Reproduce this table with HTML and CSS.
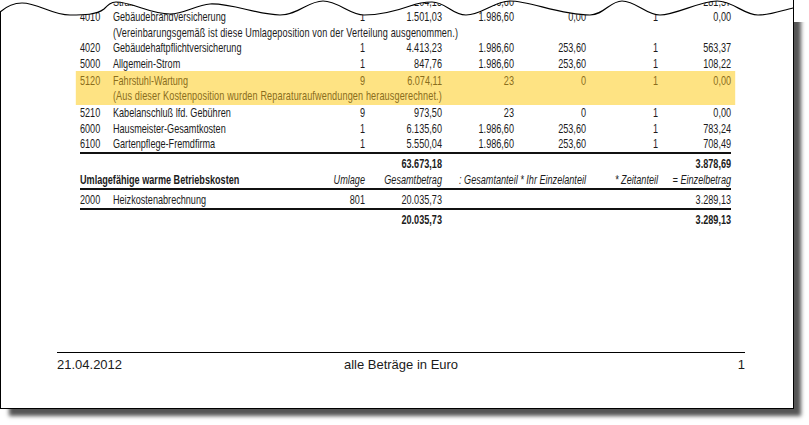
FILE: index.html
```html
<!DOCTYPE html>
<html lang="de">
<head>
<meta charset="utf-8">
<title>Betriebskostenabrechnung</title>
<link rel="stylesheet" href="styles.css">
</head>
<body>
<div class="stage">
  <div class="page">
    <div class="report">
      <div class="row">
        <span>4000</span><span>Straßenreinigung</span><span class="num">1</span><span class="num">2.204,13</span><span class="num">1.986,60</span><span class="num">253,60</span><span class="num">1</span><span class="num">281,37</span>
      </div>
      <div class="row">
        <span>4010</span><span>Gebäudebrandversicherung</span><span class="num">1</span><span class="num">1.501,03</span><span class="num">1.986,60</span><span class="num">0,00</span><span class="num">1</span><span class="num">0,00</span>
      </div>
      <div class="row">
        <span class="note">(Vereinbarungsgemäß ist diese Umlageposition von der Verteilung ausgenommen.)</span>
      </div>
      <div class="row">
        <span>4020</span><span>Gebäudehaftpflichtversicherung</span><span class="num">1</span><span class="num">4.413,23</span><span class="num">1.986,60</span><span class="num">253,60</span><span class="num">1</span><span class="num">563,37</span>
      </div>
      <div class="row">
        <span>5000</span><span>Allgemein-Strom</span><span class="num">1</span><span class="num">847,76</span><span class="num">1.986,60</span><span class="num">253,60</span><span class="num">1</span><span class="num">108,22</span>
      </div>
      <div class="hl">
        <div class="row">
          <span>5120</span><span>Fahrstuhl-Wartung</span><span class="num">9</span><span class="num">6.074,11</span><span class="num">23</span><span class="num">0</span><span class="num">1</span><span class="num">0,00</span>
        </div>
        <div class="row">
          <span class="note">(Aus dieser Kostenposition wurden Reparaturaufwendungen herausgerechnet.)</span>
        </div>
      </div>
      <div class="row">
        <span>5210</span><span>Kabelanschluß lfd. Gebühren</span><span class="num">9</span><span class="num">973,50</span><span class="num">23</span><span class="num">0</span><span class="num">1</span><span class="num">0,00</span>
      </div>
      <div class="row">
        <span>6000</span><span>Hausmeister-Gesamtkosten</span><span class="num">1</span><span class="num">6.135,60</span><span class="num">1.986,60</span><span class="num">253,60</span><span class="num">1</span><span class="num">783,24</span>
      </div>
      <div class="row ruled">
        <span>6100</span><span>Gartenpflege-Fremdfirma</span><span class="num">1</span><span class="num">5.550,04</span><span class="num">1.986,60</span><span class="num">253,60</span><span class="num">1</span><span class="num">708,49</span>
      </div>
      <div class="row total">
        <span class="gesamt num">63.673,18</span><span class="betrag num">3.878,69</span>
      </div>
      <div class="row ruled head">
        <span class="title">Umlagefähige warme Betriebskosten</span><span class="num">Umlage</span><span class="num">Gesamtbetrag</span><span class="span2 num">: Gesamtanteil * Ihr Einzelanteil</span><span class="num">* Zeitanteil</span><span class="num">= Einzelbetrag</span>
      </div>
      <div class="row ruled warm">
        <span>2000</span><span>Heizkostenabrechnung</span><span class="num">801</span><span class="num">20.035,73</span><span></span><span></span><span></span><span class="num">3.289,13</span>
      </div>
      <div class="row total total2">
        <span class="gesamt num">20.035,73</span><span class="betrag num">3.289,13</span>
      </div>
    </div>
    <div class="foot">
      <span>21.04.2012</span>
      <span class="mid">alle Beträge in Euro</span>
      <span class="end">1</span>
    </div>
  </div>
  <svg class="tear" width="809" height="22" viewBox="0 0 809 22" aria-hidden="true">
    <path d="M0,0 L0,12 C8,5 14,3 22,3 C38,3 52,15 70,15 C84,15 96,15 104,9 C108,5 111,2 116,2 C132,2 150,14 170,14 C184,14 196,5 210,4 C232,3 258,15 280,15 C298,15 308,1 323,1 C338,1 350,15 364,15 C382,15 396,11 410,6 C418,3 424,2 432,2 C446,2 452,15 466,15 C482,15 494,1 510,1 C530,1 560,15 590,15 C604,15 610,1 622,1 C636,1 646,15 660,15 C676,15 700,1 717,1 C733,1 744,15 758,15 C772,15 783,10 793,8 L793,0 L809,0 L809,22 L794,22 L794,0 Z" fill="#fff"/>
    <path d="M0,12 C8,5 14,3 22,3 C38,3 52,15 70,15 C84,15 96,15 104,9 C108,5 111,2 116,2 C132,2 150,14 170,14 C184,14 196,5 210,4 C232,3 258,15 280,15 C298,15 308,1 323,1 C338,1 350,15 364,15 C382,15 396,11 410,6 C418,3 424,2 432,2 C446,2 452,15 466,15 C482,15 494,1 510,1 C530,1 560,15 590,15 C604,15 610,1 622,1 C636,1 646,15 660,15 C676,15 700,1 717,1 C733,1 744,15 758,15 C772,15 783,10 793,8" fill="none" stroke="#000" stroke-width="1.2"/>
  </svg>
</div>
</body>
</html>
```
FILE: styles.css
```css
* { box-sizing: border-box; }
html, body { margin: 0; background: #fff; }
body {
  font-family: "Liberation Sans", Arial, sans-serif;
  color: #1b1b1b;
}
.stage {
  position: relative;
  width: 809px;
  height: 425px;
}
.page {
  display: flex;
  flex-direction: column;
  width: 794px;
  height: 409px;
  border: 1px solid #000;
  border-top: 0;
  background: #fff;
  overflow: hidden;
  box-shadow: 8px 8px 4px -1px #555;
}
.tear {
  position: absolute;
  left: 0;
  top: 0;
}
.report {
  flex: none;
  width: 930px;
  margin: -6.5px 0 0 79px;
  transform: scaleX(0.7);
  transform-origin: 0 0;
  font-size: 13px;
}
.row {
  display: grid;
  grid-template-columns: 47.1px 281.4px 78.6px 110px 102.9px 102.9px 102.9px 104.3px;
  height: 15.5px;
  line-height: 15.5px;
  white-space: nowrap;
}
.num { text-align: right; }
.note {
  grid-column: 2 / -1;
  letter-spacing: 0.18px;
}
.hl {
  background: #fee383;
  color: #8a6d1c;
  margin: 0 -5.7px;
  padding: 1.5px 5.7px;
}
.ruled {
  height: 17.5px;
  border-bottom: 2px solid #111;
}
.total {
  height: 17.5px;
  padding-top: 2px;
  font-weight: bold;
}
.gesamt { grid-column: 4; }
.betrag { grid-column: 8; }
.head {
  margin-top: 1px;
  font-style: italic;
}
.head .title {
  grid-column: 1 / 3;
  font-style: normal;
  font-weight: bold;
}
.head .span2 { grid-column: 5 / 7; }
.warm {
  height: 20.5px;
  padding-top: 2px;
}
.total2 { padding-top: 2.3px; }
.foot {
  margin: auto 0 35px 56px;
  width: 688px;
  border-top: 1px solid #000;
  padding-top: 4px;
  display: grid;
  grid-template-columns: 1fr auto 1fr;
  font-size: 13px;
  line-height: 16px;
}
.foot .end { text-align: right; }
```
